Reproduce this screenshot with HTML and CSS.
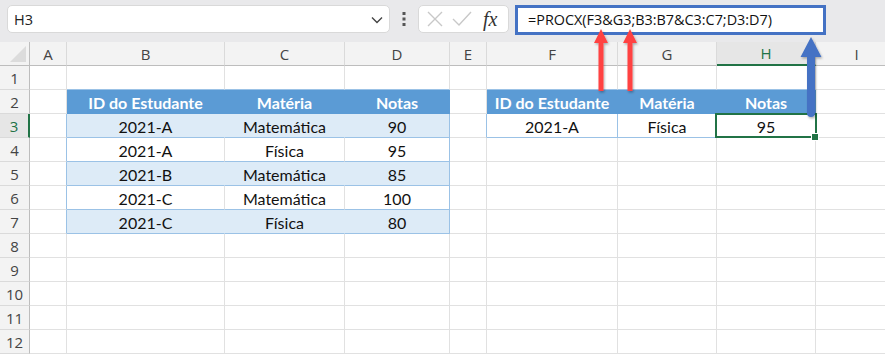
FILE: index.html
```html
<!DOCTYPE html>
<html lang="pt">
<head>
  <meta charset="UTF-8">
  <title>PROCX - várias condições</title>
  <link rel="stylesheet" href="styles.css">
</head>
<body>
  <div class="toolbar">
    <div class="namebox">
      <span>H3</span>
      <svg class="chevron" width="12" height="8" viewBox="0 0 12 8"><path d="M1 1.5 L6 6.5 L11 1.5" fill="none" stroke="#444" stroke-width="1.4"/></svg>
    </div>
    <svg class="grip" width="4" height="16" viewBox="0 0 4 16"><rect x="0.5" y="1" width="3" height="3" fill="#555"/><rect x="0.5" y="6.5" width="3" height="3" fill="#555"/><rect x="0.5" y="12" width="3" height="3" fill="#555"/></svg>
    <div class="fxbox">
      <svg width="16" height="16" viewBox="0 0 16 16"><path d="M1 1 L15 15 M15 1 L1 15" stroke="#c8c8c8" stroke-width="1.4"/></svg>
      <svg width="20" height="16" viewBox="0 0 20 16"><path d="M1 8 L7 14 L19 1" fill="none" stroke="#c8c8c8" stroke-width="1.4"/></svg>
      <span class="fx">fx</span>
    </div>
    <div class="formula">=PROCX(F3&amp;G3;B3:B7&amp;C3:C7;D3:D7)</div>
  </div>

  <div class="sheet">
    <!-- column headers -->
    <div class="corner"></div>
    <div class="ch">A</div><div class="ch">B</div><div class="ch">C</div><div class="ch">D</div><div class="ch">E</div>
    <div class="ch">F</div><div class="ch">G</div><div class="ch active">H</div><div class="ch">I</div>

    <!-- 1 -->
    <div class="rh">1</div>
    <div class="c"></div><div class="c top"></div><div class="c top"></div><div class="c top"></div><div class="c"></div>
    <div class="c top"></div><div class="c top"></div><div class="c top"></div><div class="c"></div>

    <!-- 2 -->
    <div class="rh">2</div>
    <div class="c"></div><div class="c th">ID do Estudante</div><div class="c th">Matéria</div><div class="c th">Notas</div><div class="c"></div>
    <div class="c th">ID do Estudante</div><div class="c th">Matéria</div><div class="c th">Notas</div><div class="c"></div>

    <!-- 3 -->
    <div class="rh active">3</div>
    <div class="c edge"></div><div class="c band">2021-A</div><div class="c band">Matemática</div><div class="c band last">90</div><div class="c edge"></div>
    <div class="c row blue">2021-A</div><div class="c row blue">Física</div><div class="c row last selected">95</div><div class="c"></div>

    <!-- 4 -->
    <div class="rh">4</div>
    <div class="c edge"></div><div class="c row">2021-A</div><div class="c row">Física</div><div class="c row last">95</div><div class="c"></div>
    <div class="c"></div><div class="c"></div><div class="c"></div><div class="c"></div>

    <!-- 5 -->
    <div class="rh">5</div>
    <div class="c edge"></div><div class="c band">2021-B</div><div class="c band">Matemática</div><div class="c band last">85</div><div class="c"></div>
    <div class="c"></div><div class="c"></div><div class="c"></div><div class="c"></div>

    <!-- 6 -->
    <div class="rh">6</div>
    <div class="c edge"></div><div class="c row">2021-C</div><div class="c row">Matemática</div><div class="c row last">100</div><div class="c"></div>
    <div class="c"></div><div class="c"></div><div class="c"></div><div class="c"></div>

    <!-- 7 -->
    <div class="rh">7</div>
    <div class="c edge"></div><div class="c band">2021-C</div><div class="c band">Física</div><div class="c band last">80</div><div class="c"></div>
    <div class="c"></div><div class="c"></div><div class="c"></div><div class="c"></div>

    <div class="rh">8</div>
    <div class="c"></div><div class="c"></div><div class="c"></div><div class="c"></div><div class="c"></div>
    <div class="c"></div><div class="c"></div><div class="c"></div><div class="c"></div>

    <div class="rh">9</div>
    <div class="c"></div><div class="c"></div><div class="c"></div><div class="c"></div><div class="c"></div>
    <div class="c"></div><div class="c"></div><div class="c"></div><div class="c"></div>

    <div class="rh">10</div>
    <div class="c"></div><div class="c"></div><div class="c"></div><div class="c"></div><div class="c"></div>
    <div class="c"></div><div class="c"></div><div class="c"></div><div class="c"></div>

    <div class="rh">11</div>
    <div class="c"></div><div class="c"></div><div class="c"></div><div class="c"></div><div class="c"></div>
    <div class="c"></div><div class="c"></div><div class="c"></div><div class="c"></div>

    <div class="rh">12</div>
    <div class="c"></div><div class="c"></div><div class="c"></div><div class="c"></div><div class="c"></div>
    <div class="c"></div><div class="c"></div><div class="c"></div><div class="c"></div>
  </div>

  <!-- callout arrows drawn over the sheet -->
  <svg class="arrows" width="885" height="355" viewBox="0 0 885 355">
    <defs>
      <filter id="shadow" x="-50%" y="-20%" width="200%" height="140%">
        <feDropShadow dx="1" dy="1.5" stdDeviation="1.2" flood-color="#000" flood-opacity="0.3"/>
      </filter>
    </defs>
    <g fill="#ff4343" filter="url(#shadow)">
      <path d="M601 29 L608 43 L603.5 43 L603.5 91 L598.5 91 L598.5 43 L594 43 Z"/>
      <path d="M630 29 L637 43 L632.5 43 L632.5 91 L627.5 91 L627.5 43 L623 43 Z"/>
    </g>
    <path filter="url(#shadow)" fill="#4472c4" d="M811 37 L821.5 57 L815 57 L815 113 Q815 117 811 117 Q807 117 807 113 L807 57 L800.5 57 Z"/>
  </svg>
</body>
</html>
```

FILE: styles.css
```css
body {
  margin: 0;
  background: #fff;
  font-family: "Open Sans", sans-serif;
  position: relative;
  width: 885px;
  height: 355px;
  overflow: hidden;
}

/* formula bar */
.toolbar {
  height: 42px;
  background: #e9e9eb;
  display: flex;
  align-items: flex-start;
  padding-top: 5px;
  box-sizing: border-box;
}
.namebox {
  margin-left: 7px;
  width: 383px;
  height: 28px;
  background: #fff;
  border: 1px solid #d9d9d9;
  border-radius: 5px;
  box-sizing: border-box;
  display: flex;
  align-items: center;
  justify-content: space-between;
  padding: 0 6px 0 6px;
  font-size: 14.5px;
  color: #222;
}
.chevron {
  margin-top: 2px;
}
.grip {
  margin: 6px 12px 0 12px;
}
.fxbox {
  width: 91px;
  height: 28px;
  background: #fff;
  border: 1px solid #d9d9d9;
  border-radius: 5px;
  box-sizing: border-box;
  display: flex;
  align-items: center;
  gap: 9px;
  padding-left: 8px;
}
.fx {
  font-family: "Liberation Serif", serif;
  font-style: italic;
  font-size: 20px;
  color: #333;
  margin-left: 2px;
}
.formula {
  margin-left: 6px;
  width: 311px;
  height: 30px;
  border: 3px solid #4472c4;
  background: #fff;
  box-sizing: border-box;
  padding-left: 10px;
  font-size: 14.4px;
  line-height: 24px;
  color: #111;
}

/* grid */
.sheet {
  display: grid;
  grid-template-columns: 30px 37px 158px 120px 105px 37px 131px 99px 99px 82px;
  grid-auto-rows: 24px;
}
.corner, .ch, .rh {
  background: #f3f3f3;
  color: #444;
  font-size: 15px;
  display: flex;
  align-items: center;
  justify-content: center;
  box-sizing: border-box;
}
.corner {
  border-right: 1px solid #bdbdbd;
  border-bottom: 1px solid #bdbdbd;
  position: relative;
}
.corner::after {
  content: "";
  position: absolute;
  right: 3px;
  bottom: 3px;
  border-left: 16px solid transparent;
  border-bottom: 16px solid #dcdcdc;
}
.ch {
  border-right: 1px solid #dadada;
  border-bottom: 1px solid #bdbdbd;
}
.ch.active {
  background: #e6e6e6;
  color: #217346;
  border-bottom: 2px solid #217346;
}
.rh {
  border-right: 1px solid #bdbdbd;
  border-bottom: 1px solid #dadada;
}
.rh.active {
  background: #e6e6e6;
  color: #217346;
  border-right: 2px solid #217346;
}

.c {
  border-right: 1px solid #e1e1e1;
  border-bottom: 1px solid #e1e1e1;
  box-sizing: border-box;
  display: flex;
  align-items: flex-end;
  justify-content: center;
  font-family: Lato, "Open Sans", sans-serif;
  font-size: 16px;
  line-height: 20px;
  color: #111;
  white-space: nowrap;
}
.c.top {
  border-bottom-color: #9bc2e6;
}
.c.edge {
  border-right-color: #9bc2e6;
}
.th {
  background: #5b9bd5;
  border-right-color: #5b9bd5;
  border-bottom-color: #5b9bd5;
  color: #fff;
  font-weight: bold;
}
.band {
  background: #ddebf7;
  border-right-color: #ddebf7;
  border-bottom-color: #9bc2e6;
}
.row {
  border-bottom-color: #9bc2e6;
}
.row.blue, .band.last, .row.last {
  border-right-color: #9bc2e6;
}

/* active cell */
.selected {
  position: relative;
}
.selected::after {
  content: "";
  position: absolute;
  left: -2px;
  top: -1px;
  right: -2px;
  bottom: -1px;
  border: 2px solid #217346;
}
.selected::before {
  content: "";
  position: absolute;
  right: -4px;
  bottom: -4px;
  width: 6px;
  height: 6px;
  background: #217346;
  border: 1px solid #fff;
  z-index: 1;
}

.arrows {
  position: absolute;
  left: 0;
  top: 0;
  pointer-events: none;
}
```
